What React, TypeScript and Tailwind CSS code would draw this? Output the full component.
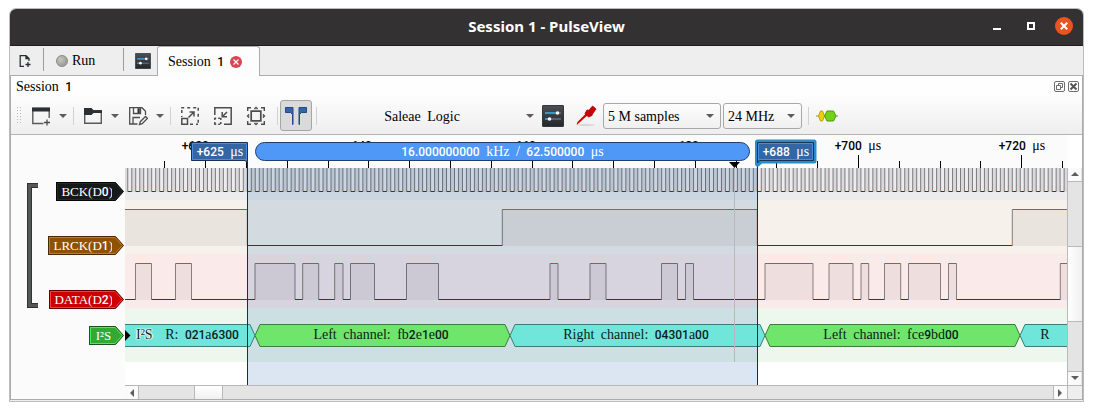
import type { ReactNode } from 'react';
import clsx from 'clsx';

const SERIF = 'font-["Liberation_Serif",serif]';
const SANS = 'font-["Roboto","Liberation_Sans",sans-serif]';

/** Text with serif letters and sans-serif numerals, words set slightly apart. */
function Mixed({ children, className = '' }: { children: string; className?: string }) {
  const words = children.split(' ');
  return (
    <span className={clsx('inline-flex gap-[3px] whitespace-pre', SERIF, className)}>
      {words.map((word, i) => (
        <span key={i}>
          {word.split(/([0-9.+]+)/).map((part, j) =>
            /^[0-9.+]+$/.test(part) ? (
              <span key={j} className={clsx('text-[12px] font-medium', SANS)}>{part}</span>
            ) : (
              part
            ),
          )}
          {i < words.length - 1 ? ' ' : ''}
        </span>
      ))}
    </span>
  );
}

function Caret() {
  return (
    <svg viewBox="0 0 12 6" className="h-1.5 w-3" aria-hidden="true">
      <path d="M2 1h8L6 5z" fill="#5c5c5c" />
    </svg>
  );
}

function Separator({ className }: { className: string }) {
  return <span className={clsx('h-[18px] w-px shrink-0 bg-[#d2d2d2]', className)} />;
}

function ToolButton({ label, className, children }: { label: string; className: string; children: ReactNode }) {
  return (
    <button type="button" aria-label={label} className={clsx('flex h-8 shrink-0 items-center justify-center', className)}>
      {children}
    </button>
  );
}

function SlidersIcon({ className }: { className: string }) {
  return (
    <svg viewBox="0 0 22 22" className={className} aria-hidden="true">
      <defs>
        <linearGradient id="panel" x1="0" y1="0" x2="0" y2="1">
          <stop offset="0" stopColor="#4a4f54" />
          <stop offset="1" stopColor="#24282c" />
        </linearGradient>
      </defs>
      <rect x="0.5" y="0.5" width="21" height="21" rx="0.5" fill="url(#panel)" stroke="#33383c" />
      <path d="M3 8h12M3 14h4" stroke="#3daee9" strokeWidth="1.6" />
      <path d="M16 8h3M8 14h11" stroke="#6a7075" strokeWidth="1.4" />
      <circle cx="15.5" cy="8" r="1.8" fill="#fff" />
      <circle cx="7.5" cy="14" r="1.8" fill="#fff" />
    </svg>
  );
}

function TitleBar() {
  return (
    <header className="flex h-[37px] items-center border-b border-[#1f1e1f] bg-[#343132] pr-[10px] pb-0.5 text-white">
      <div className="w-[100px]" />
      <h1 className='flex-1 text-center font-["Noto_Sans",sans-serif] text-[15px] font-bold'>Session 1 - PulseView</h1>
      <div className="flex w-[90px] items-center justify-end">
        <button type="button" aria-label="Minimize" className="mr-[26px] flex h-2 w-2 items-end">
          <span className="h-0.5 w-2 bg-white" />
        </button>
        <button type="button" aria-label="Maximize" className="mr-[20px] h-2 w-2 border-2 border-white" />
        <button type="button" aria-label="Close" className="flex h-[18px] w-[18px] items-center justify-center rounded-full bg-[#e95420]">
          <svg viewBox="0 0 8 8" className="h-2 w-2" aria-hidden="true">
            <path d="M0.8 0.8l6.4 6.4M7.2 0.8L0.8 7.2" stroke="#fff" strokeWidth="2" />
          </svg>
        </button>
      </div>
    </header>
  );
}

function TabBar() {
  return (
    <nav className="flex h-[30px] items-end border-b border-[#acacac] bg-[#eeeeee] text-[14px]">
      <button type="button" aria-label="New session" className="flex h-[29px] w-[33px] items-center justify-center pr-1">
        <svg viewBox="0 0 12 14" className="h-3.5 w-3" fill="none" stroke="#2a2e32" strokeWidth="1.3" aria-hidden="true">
          <path d="M5 12.3H1.2V1.6H7L10 4.6V7M7 1.6V4.6H10M9 8v5M6.500 10.5h5" />
        </svg>
      </button>
      <span className="mb-1 h-[23px] w-px bg-[#9c9c9c]" />
      <button type="button" className="flex h-[29px] w-[79px] items-center gap-1 pl-3">
        <span className="h-3 w-3 rounded-full border border-[#8b8b87] bg-radial-[at_35%_35%] from-[#c6c6c0] to-[#8e8e88]" />
        <Mixed>Run</Mixed>
      </button>
      <span className="mb-1 h-[23px] w-px bg-[#9c9c9c]" />
      <button type="button" aria-label="Settings" className="flex h-[29px] w-[33px] items-center justify-end pr-1.5">
        <SlidersIcon className="h-4 w-4" />
      </button>
      <div className="-mb-px flex h-[30px] w-[103px] items-center gap-1.5 rounded-t-[3px] border border-b-0 border-[#acacac] bg-[#fdfdfd] pl-2.5">
        <Mixed>Session 1</Mixed>
        <button type="button" aria-label="Close tab" className="flex h-3 w-3 items-center justify-center rounded-full bg-[#da4453]">
          <svg viewBox="0 0 6 6" className="h-1.5 w-1.5" aria-hidden="true">
            <path d="M0.500 0.500l5 5M5.500 0.500l-5 5" stroke="#fff" strokeWidth="1.1" />
          </svg>
        </button>
      </div>
    </nav>
  );
}

function DockHeader() {
  const box = 'flex h-[11px] w-[11px] items-center justify-center rounded-[2px] border border-[#6e6e6e]';
  return (
    <div className="flex h-[21px] items-center justify-between pr-[3px] pl-[5px] text-[14px]">
      <Mixed>Session 1</Mixed>
      <div className="flex gap-[3px]">
        <button type="button" aria-label="Float" className={box}>
          <svg viewBox="0 0 9 9" className="h-[9px] w-[9px]" fill="none" stroke="#6a6a6a" aria-hidden="true">
            <path d="M3.500 3V1.500h4v4H6M1.500 3.500h4v4h-4z" />
          </svg>
        </button>
        <button type="button" aria-label="Close dock" className={box}>
          <svg viewBox="0 0 9 9" className="h-[9px] w-[9px]" stroke="#555" strokeWidth="2" aria-hidden="true">
            <path d="M1.500 1.500l6 6M7.500 1.500l-6 6" />
          </svg>
        </button>
      </div>
    </div>
  );
}

function ToolBar() {
  const select = 'h-full w-full appearance-none rounded-[3px] border border-[#a8a8a8] bg-linear-to-b from-[#fdfdfd] to-[#f0f0f0] pl-1 text-[14px] text-black';
  return (
    <div className="flex h-[37px] items-center pl-[5px]">
      <svg viewBox="0 0 7 18" className="h-[18px] w-[7px]" aria-hidden="true">
        <path d="M1.500 0v18M4.500 0v18" stroke="#b9b9b9" strokeDasharray="1 2" />
      </svg>
      <ToolButton label="New view" className="ml-0.5 w-8">
        <svg viewBox="0 0 20 20" className="h-5 w-5" aria-hidden="true">
          <path d="M12.500 17.500H1.800V2.500h16.400V12" fill="none" stroke="#5a5a5a" strokeWidth="1.4" />
          <path d="M1 1.500h18v4H1z" fill="#2c3034" />
          <path d="M16 13.500v6M13 16.500h6" stroke="#4a4a4a" strokeWidth="1.3" />
        </svg>
      </ToolButton>
      <ToolButton label="New view menu" className="w-3"><Caret /></ToolButton>
      <Separator className="ml-1" />
      <ToolButton label="Open" className="ml-[3px] w-8">
        <svg viewBox="0 0 20 20" className="h-5 w-5" aria-hidden="true">
          <path d="M1.700 8V17.300H18.300V4.700H10" fill="none" stroke="#5a5a5a" strokeWidth="1.4" />
          <path d="M1 2h7.500l2 2.200H19V7h-8.500l-2 2H1z" fill="#2c3034" />
        </svg>
      </ToolButton>
      <ToolButton label="Open menu" className="w-3"><Caret /></ToolButton>
      <ToolButton label="Save" className="ml-px w-8">
        <svg viewBox="0 0 20 20" className="h-5 w-5" fill="none" stroke="#4d4d4d" strokeWidth="1.3" aria-hidden="true">
          <path d="M9.500 18H1.700V1.700H14L17.500 5.200V9M5 18V11.500H12M5.500 1.700V7.500H12.500V1.700" />
          <path d="M9.500 2.200h2.200V7H9.500z" fill="#2c3034" stroke="none" />
          <path d="M11.500 18.500l.8-2.800 5.200-5.200 1.900 1.900-5.200 5.200z" />
        </svg>
      </ToolButton>
      <ToolButton label="Save menu" className="w-3"><Caret /></ToolButton>
      <Separator className="ml-1" />
      <ToolButton label="Zoom in" className="ml-0.5 w-[33px]">
        <svg viewBox="0 0 20 20" className="h-5 w-5" fill="none" stroke="#4d4d4d" strokeWidth="1.5" aria-hidden="true">
          <path d="M1.800 12.500h5.700v5.700H1.800zM8.500 11.500l5-5M9.500 6h4.500v4.500" />
          <path d="M1.200 1.800h17M18.200 1.800v17M1.800 4v7M10 18.200h8" strokeDasharray="3 3" />
        </svg>
      </ToolButton>
      <ToolButton label="Zoom out" className="w-[33px]">
        <svg viewBox="0 0 20 20" className="h-5 w-5" fill="none" stroke="#4d4d4d" strokeWidth="1.5" aria-hidden="true">
          <path d="M1.800 9V1.800H18.200V18.200H11M14 6l-4.500 4.500M9.200 6v4.800H14" />
          <path d="M1.200 12.200h7M1.800 12v7M1.200 18.200h7M7.800 12v7" strokeDasharray="2 2" />
        </svg>
      </ToolButton>
      <ToolButton label="Zoom to fit" className="w-[33px]">
        <svg viewBox="0 0 20 20" className="h-5 w-5" fill="none" stroke="#4d4d4d" strokeWidth="1.4" aria-hidden="true">
          <path d="M5.200 5.200h9.600v9.600H5.200z" strokeWidth="1.7" />
          <path d="M1.700 5V1.700H5M15 1.700h3.300V5M18.300 15v3.300H15M5 18.300H1.700V15" />
          <path d="M8 2.800L10 .8l2 2zM8 17.200l2 2 2-2zM2.800 8L.8 10l2 2zM17.200 8l2 2-2 2z" fill="#4d4d4d" strokeWidth=".6" />
        </svg>
      </ToolButton>
      <Separator className="ml-[5px]" />
      <button type="button" aria-label="Show cursors" aria-pressed="true" className="ml-0.5 flex h-[31px] w-8 shrink-0 items-center justify-center rounded-[3px] border border-[#a6a6a6] bg-[#dadada]">
        <svg viewBox="0 0 24 20" className="h-5 w-6" fill="#3465a4" stroke="#204a87" aria-hidden="true">
          <path d="M1.500 1.500h7.500V18.500h-.5V8.500L6.500 6.500h-5zM22.500 1.500H15V18.500h.5V8.500l2-2h5z" />
        </svg>
      </button>
      <Separator className="ml-1" />
      <button type="button" className="flex h-8 w-[220px] shrink-0 items-center pr-px pl-[3px] text-[14px]">
        <span className="flex-1 text-center"><Mixed>Saleae Logic</Mixed></span>
        <Caret />
      </button>
      <ToolButton label="Configure device" className="ml-[5px] w-[22px]"><SlidersIcon className="h-[22px] w-[22px]" /></ToolButton>
      <ToolButton label="Channels" className="ml-[11px] w-[22px]">
        <svg viewBox="0 0 22 22" className="h-[22px] w-[22px]" aria-hidden="true">
          <ellipse cx="11" cy="20" rx="9" ry="1.200" fill="#d9d9d9" />
          <path d="M1.500 20l1-3L12 7.500l1.700 1.700L4 18z" fill="#cc0000" />
          <path d="M10 8.500l2-3.500 2 .3 3.500-4.300 3.500 3-3.500 5-.5 1.500-3.500 1.500z" fill="#cc0000" stroke="#a40000" strokeWidth=".8" />
        </svg>
      </ToolButton>
      <div className="relative ml-1.5 h-[26px] w-[118px] shrink-0">
        <select aria-label="Sample count" className={clsx(select, SERIF)} defaultValue="5 M samples"><option>5 M samples</option></select>
        <span className="pointer-events-none absolute inset-y-0 right-[5px] flex items-center"><Caret /></span>
      </div>
      <div className="relative ml-0.5 h-[26px] w-[79px] shrink-0">
        <select aria-label="Sample rate" className={clsx(select, SERIF)} defaultValue="24 MHz"><option>24 MHz</option></select>
        <span className="pointer-events-none absolute inset-y-0 right-[5px] flex items-center"><Caret /></span>
      </div>
      <Separator className="ml-1.5" />
      <ToolButton label="Add decoder" className="ml-[7px] w-[22px]">
        <svg viewBox="0 0 22 14" className="h-3.5 w-[22px]" aria-hidden="true">
          <path d="M0 7h22" stroke="#888a85" />
          <path d="M2.500 7L4.500 2h2l2 5-2 5h-2z" fill="#edd400" stroke="#c4a000" />
          <path d="M8.500 7l2.500-5h6.500L20 7l-2.500 5H11z" fill="#73d216" stroke="#4e9a06" />
        </svg>
      </ToolButton>
    </div>
  );
}

type Channel = { name: string; body: string; edge: string; inner: string; fill: string };
const CHANNELS: Channel[] = [
  { name: 'BCK(D0)', body: 'bg-[#16191a] border-[#050606] inset-ring-[#24292a]', edge: '#050606', inner: '#24292a', fill: '#16191a' },
  { name: 'LRCK(D1)', body: 'bg-[#8f5202] border-[#472901] inset-ring-[#cc7a0c]', edge: '#472901', inner: '#cc7a0c', fill: '#8f5202' },
  { name: 'DATA(D2)', body: 'bg-[#cc0000] border-[#660000] inset-ring-[#ff3b3b]', edge: '#660000', inner: '#ff3b3b', fill: '#cc0000' },
  { name: 'I²S', body: 'bg-[#33a833] border-[#1a541a] inset-ring-[#55e855]', edge: '#1a541a', inner: '#55e855', fill: '#33a833' },
];

function ChannelFlag({ channel }: { channel: Channel }) {
  return (
    <button type="button" className="flex h-[19px] text-[13px] text-white">
      <span className={clsx('flex h-full min-w-6 items-center justify-center border border-r-0 pl-1 inset-ring-1', channel.body)}>
        <Mixed>{channel.name}</Mixed>
      </span>
      <svg viewBox="0 0 12 19" className="-ml-px h-[19px] w-3" aria-hidden="true">
        <path d="M0 .5h3.500L11.500 9.500l-8 9H0z" fill={channel.fill} />
        <path d="M0 1.500h3L10.200 9.500l-7.200 8H0" fill="none" stroke={channel.inner} />
        <path d="M0 .5h3.500L11.500 9.500l-8 9H0" fill="none" stroke={channel.edge} />
      </svg>
    </button>
  );
}

function ChannelColumn() {
  return (
    <div className="flex w-[114px] shrink-0 justify-between bg-[#fbfbfb] pt-[47px] pr-px pl-4">
      <svg viewBox="0 0 12 127" className="h-[127px] w-3" aria-hidden="true">
        <path d="M11 3.500H2.500V123.500H11" fill="none" stroke="#2e3436" strokeWidth="5" />
        <path d="M11 3.500H2.500V123.500H11" fill="none" stroke="#555753" strokeWidth="3" />
      </svg>
      <div className="flex flex-col items-end">
        <div className="flex flex-col items-end gap-[35px]">
          {CHANNELS.slice(0, 3).map((c) => <ChannelFlag key={c.name} channel={c} />)}
        </div>
        <div className="mt-[17px]"><ChannelFlag channel={CHANNELS[3]} /></div>
      </div>
    </div>
  );
}

/* Trace canvas: drawing units span X0..X0+W horizontally and Y0..Y0+H vertically. */
const X0 = 125;
const Y0 = 135;
const W = 942;
const H = 250;
const END = X0 + W;
const pct = (x: number) => `${((x - X0) / W) * 100}%`;
const span = (w: number) => `${(w / W) * 100}%`;

const LRCK = [[X0, 247.3], [502.3, 757.3], [1012.3, END]];
const DATA = [
  [135.5, 151.5], [175.5, 191.5], [255, 295], [302.700, 318.700], [334.700, 343], [350.500, 374.500], [406.500, 438.500],
  [550, 558], [590, 606], [661.500, 677.500], [685.500, 693.500], [765, 813], [829, 853], [861, 868.700],
  [884.500, 900.700], [908.500, 940.500], [948.500, 956.500], [1060.300, END],
];
const HALF_BIT = 510 / 128;
const CLOCK = Array.from({ length: 121 }, (_, i) => 247.3 + HALF_BIT + (i - 16) * HALF_BIT * 2)
  .map((x) => [Math.max(x, X0), Math.min(x + HALF_BIT, END)])
  .filter(([a, b]) => b > a);

function Wave({ pulses, high, low, clock }: { pulses: number[][]; high: number; low: number; clock?: boolean }) {
  const lows: number[][] = [];
  let x = X0;
  pulses.forEach(([a, b]) => {
    if (a > x) lows.push([x, a]);
    x = b;
  });
  if (x < END) lows.push([x, END]);
  return (
    <g>
      {pulses.map(([a, b]) => (
        <g key={a}>
          <rect x={a} y={high} width={b - a} height={low - high + 0.5} fill="#000" fillOpacity={clock ? 0.08 : 0.05} />
          {a > X0 && <path d={`M${a} ${high}V${low}`} stroke="#000" strokeOpacity="0.45" />}
          {b < END && <path d={`M${b} ${high}V${low}`} stroke="#000" strokeOpacity="0.45" />}
        </g>
      ))}
      {!clock && <path d={pulses.map(([a, b]) => `M${a} ${high}H${b}`).join('')} stroke="#00b800" />}
      <path d={lows.map(([a, b]) => `M${a} ${low}H${b}`).join('')} stroke="#b80000" />
    </g>
  );
}

const ANNOTATIONS = [
  { from: 100, to: 255, text: 'R: 021a6300', center: 202, color: 'cyan' },
  { from: 255, to: 510, text: 'Left channel: fb2e1e00', center: 381, color: 'green' },
  { from: 510, to: 765, text: 'Right channel: 04301a00', center: 636, color: 'cyan' },
  { from: 765, to: 1020, text: 'Left channel: fce9bd00', center: 891, color: 'green' },
  { from: 1020, to: 1110, text: 'R', center: 1045, color: 'cyan' },
];

const TICKS = Array.from({ length: 23 }, (_, i) => ({ x: Math.round(858 + (i - 17) * 40.8) + 0.5, major: (i - 17) % 4 === 0 }));
const RULER = [
  { x: 205, text: '+620 μs' }, { x: 368, text: '+640 μs' }, { x: 532, text: '+660 μs' },
  { x: 695, text: '+680 μs' }, { x: 858, text: '+700 μs' }, { x: 1022, text: '+720 μs' },
];

function TraceCanvas() {
  return (
    <div className="relative h-[250px] min-w-0 flex-1 overflow-hidden bg-[#fbfbfb] text-[14px] leading-4">
      {RULER.map((r) => (
        <span key={r.x} className="absolute top-0.5 -translate-x-1/2 text-black" style={{ left: pct(r.x) }}><Mixed>{r.text}</Mixed></span>
      ))}
      <svg viewBox={`${X0} ${Y0} ${W} ${H}`} preserveAspectRatio="none" className="absolute inset-0 h-full w-full" fill="none" aria-hidden="true">
        {TICKS.map((t) => <path key={t.x} d={`M${t.x} ${t.major ? 155 : 161}V168`} stroke="#000" />)}
        <path d="M125 168H1067V200H125z" fill="#ececee" />
        <path d="M125 200H1067V254H125z" fill="#f6f1ea" />
        <path d="M125 254H1067V308H125z" fill="#fbeaea" />
        <path d="M125 308H1067V362H125z" fill="#edf7ee" />
        <path d="M125 362H1067V385H125z" fill="#fff" />
        <path d="M247.500 168H757.500V385H247.500z" fill="#2064b0" fillOpacity="0.16" />
        <Wave pulses={CLOCK} high={168} low={191.5} clock />
        <Wave pulses={LRCK} high={209.5} low={245.5} />
        <Wave pulses={DATA} high={263.5} low={299.5} />
        {ANNOTATIONS.map((a) => (
          <path
            key={a.from}
            d={`M${a.from} 335.5L${a.from + 5} 324.5H${a.to - 5}L${a.to} 335.5L${a.to - 5} 346.5H${a.from + 5}z`}
            fill={a.color === 'green' ? '#70e56c' : '#70e5da'}
            stroke={a.color === 'green' ? '#3c7d3a' : '#3c7d77'}
          />
        ))}
        <path d="M125 330l5.500 5.500L125 341z" fill="#000" />
        <path d="M247.500 161V385M757.500 163V385" stroke="#14304f" />
        <path d="M734.500 168V362" stroke="#b8b8b8" />
        <path d="M729 162h11l-5.500 6z" fill="#000" />
        <path d="M191.500 142.500H247.500V163L245 160.500H191.500z" fill="#3465a4" stroke="#1a3252" />
        <path d="M192.500 143.500H246.500V160L246 159.500H192.500z" stroke="#4c8be0" />
        <path d="M757.500 142H814V161H761L757.500 164z" stroke="#2b8cc8" strokeWidth="5" strokeLinejoin="round" />
        <path d="M757.500 142.500H813.500V160.500H760L757.500 163z" fill="#3465a4" stroke="#1a3252" />
        <path d="M758.500 143.500H812.500V159.500H759L758.500 160z" stroke="#4c8be0" />
      </svg>
      <span className="absolute top-2 -translate-x-1/2 text-white" style={{ left: pct(220) }}><Mixed>+625 μs</Mixed></span>
      <span className="absolute top-2 -translate-x-1/2 text-white" style={{ left: pct(786) }}><Mixed>+688 μs</Mixed></span>
      <div
        className="absolute top-[7px] flex h-[19px] items-center justify-center rounded-full border border-[#1f3f6b] bg-[#4f98f8] text-white"
        style={{ left: pct(255), width: span(495) }}
      >
        <Mixed>16.000000000 kHz / 62.500000 μs</Mixed>
      </div>
      <span className="absolute top-[191px] text-[#1a1a1a] [text-shadow:0_0_2px_#fff,0_0_2px_#fff,0_0_1px_#fff,1px_0_1px_#fff,-1px_0_1px_#fff]" style={{ left: pct(136) }}>
        <Mixed>I²S</Mixed>
      </span>
      {ANNOTATIONS.map((a) => (
        <span key={a.from} className="absolute top-[191px] -translate-x-1/2 text-[#0c1c1a]" style={{ left: pct(a.center) }}><Mixed>{a.text}</Mixed></span>
      ))}
    </div>
  );
}

function Arrow({ d, label }: { d: string; label: string }) {
  return (
    <button type="button" aria-label={label} className="flex h-[13px] w-[13px] shrink-0 items-center justify-center bg-[#fafafa]">
      <svg viewBox="0 0 8 8" className="h-2 w-2" fill="#5c5c5c" aria-hidden="true"><path d={d} /></svg>
    </button>
  );
}

function VerticalScroll() {
  return (
    <div className="mt-[33px] flex h-[217px] w-[15px] shrink-0 flex-col border-l border-[#b9b9b9] bg-[#e4e4e4]">
      <Arrow label="Scroll up" d="M0 5h8L4 1z" />
      <div className="grow-[65] basis-0 border-t border-[#b9b9b9]" />
      <div className="grow-[74] basis-0 border-y border-[#b9b9b9] bg-linear-to-r from-white to-[#f0f0f0]" />
      <div className="grow-[50] basis-0 border-b border-[#b9b9b9]" />
      <Arrow label="Scroll down" d="M0 1h8L4 5z" />
    </div>
  );
}

function HorizontalScroll() {
  return (
    <div className="ml-[114px] flex h-3.5 border-t border-[#b9b9b9] bg-[#e4e4e4]">
      <Arrow label="Scroll left" d="M6 0v8L2 4z" />
      <div className="grow-[55] basis-0 border-l border-[#b9b9b9]" />
      <div className="grow-[27] basis-0 border-x border-[#b9b9b9] bg-linear-to-b from-white to-[#f0f0f0]" />
      <div className="grow-[833] basis-0 border-r border-[#b9b9b9]" />
      <Arrow label="Scroll right" d="M2 0v8l4-4z" />
      <div className="w-[15px] shrink-0 border-l border-[#b9b9b9] bg-[#eeeeee]" />
    </div>
  );
}

export default function App() {
  return (
    <div className="bg-white pt-2 pr-[9px] pl-[9px] text-black">
      <main className="overflow-hidden rounded-t-[7px] border border-[#bcbcbc]">
        <TitleBar />
        <TabBar />
        <section className="border-x border-b border-[#acacac]">
          <div className="border-b border-[#b4b4b4] bg-linear-to-b from-[#fefefe] from-30% to-[#eeeeee]">
            <DockHeader />
            <ToolBar />
          </div>
          <div className="flex">
            <ChannelColumn />
            <TraceCanvas />
            <VerticalScroll />
          </div>
          <div className="bg-[#fbfbfb]"><HorizontalScroll /></div>
        </section>
        <div className="h-px bg-[#eeeeee]" />
      </main>
    </div>
  );
}
